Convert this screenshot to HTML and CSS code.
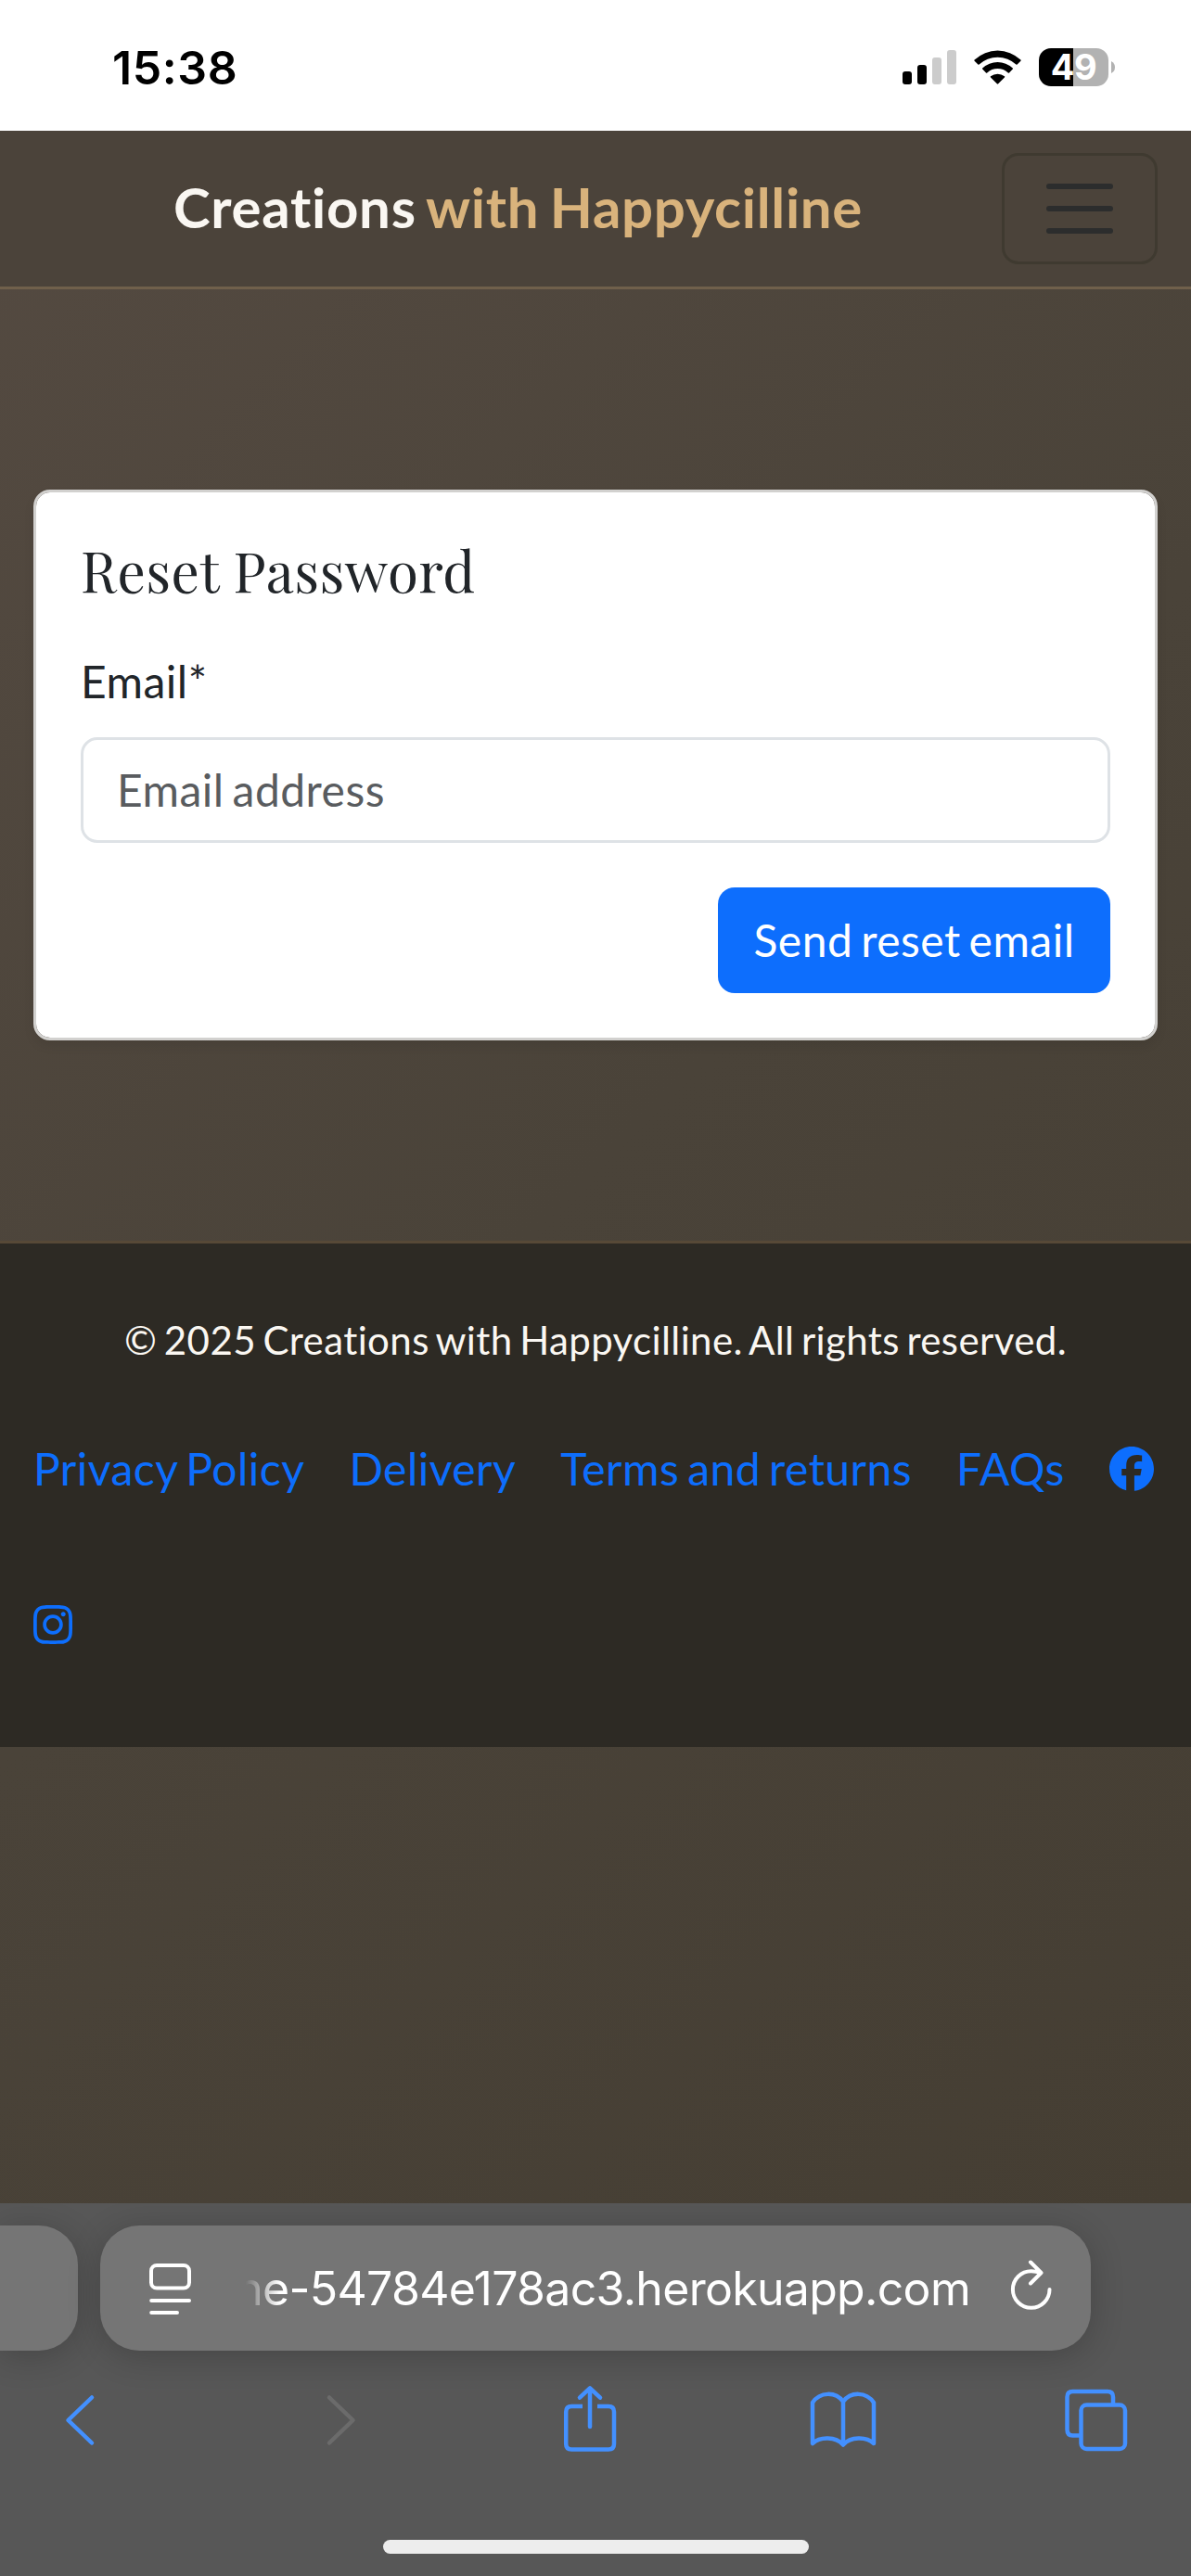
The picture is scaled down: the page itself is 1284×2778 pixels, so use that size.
FILE: index.html
```html
<!DOCTYPE html>
<html lang="en">
<head>
<meta charset="utf-8">
<title>Reset Password</title>
<link rel="stylesheet" href="styles.css">
</head>
<body>
<div class="status">
  <span class="time">15:38</span>
  <div class="indicators">
    <svg class="signal" width="58" height="37" viewBox="0 0 58 37">
      <rect x="0" y="23" width="10" height="14" rx="3"/>
      <rect x="16" y="16" width="10" height="21" rx="3"/>
      <rect class="off" x="32" y="8" width="10" height="29" rx="3"/>
      <rect class="off" x="48" y="0" width="10" height="37" rx="3"/>
    </svg>
    <svg class="wifi" width="51" height="37" viewBox="0 0 51 37">
      <path d="M0.6 10.6A36 36 0 0 1 50.4 10.6Q51 11.2 50.4 11.8L46.6 15.6Q46 16.1 45.4 15.6A29 29 0 0 0 5.6 15.6Q5 16.1 4.4 15.6L.6 11.8Q0 11.2 .6 10.6Z"/>
      <path d="M9.2 19.4A24 24 0 0 1 41.8 19.4Q42.4 20 41.8 20.6L38 24.400Q37.400 25 36.800 24.400A17 17 0 0 0 14.200 24.400Q13.600 25 13 24.400L9.200 20.600Q8.600 20 9.200 19.400Z"/>
      <path d="M18 28.300A12 12 0 0 1 33 28.300Q33.600 28.900 33 29.500L26.200 36.300Q25.500 37 24.800 36.300L18 29.500Q17.400 28.900 18 28.300Z"/>
    </svg>
    <div class="battery"><span class="level">49</span><svg width="4" height="13" viewBox="0 0 4 13"><path d="M0 0Q4 2 4 6.500T0 13Z"/></svg></div>
  </div>
</div>

<div class="page">
  <nav class="navbar">
    <a class="brand">Creations <span>with Happycilline</span></a>
    <button class="toggler" aria-label="Menu">
      <svg width="90" height="90" viewBox="0 0 30 30"><path d="M4 7h22M4 15h22M4 23h22"/></svg>
    </button>
  </nav>

  <main class="content">
    <form class="card">
      <h5 class="title">Reset Password</h5>
      <label class="label">Email*</label>
      <div class="field">Email address</div>
      <button class="submit" type="button">Send reset email</button>
    </form>
  </main>

  <footer class="footer">
    <p class="copyright">© 2025 Creations with Happycilline. All rights reserved.</p>
    <div class="links">
      <a>Privacy Policy</a>
      <a>Delivery</a>
      <a>Terms and returns</a>
      <a>FAQs</a>
      <a class="icon"><svg width="48" height="48" viewBox="0 0 512 512"><path d="M512 256C512 114.600 397.400 0 256 0S0 114.600 0 256C0 376 82.700 476.800 194.200 504.500V334.200H141.400V256h52.800V222.300c0-87.100 39.400-127.500 125-127.500c16.200 0 44.200 3.200 55.700 6.400V172c-6-.6-16.500-1-29.600-1c-42 0-58.200 15.900-58.200 57.200V256h83.600l-14.400 78.200H287V510.100C413.800 494.800 512 386.900 512 256z"/></svg></a>
      <a class="icon"><svg width="42" height="48" viewBox="0 0 448 512"><path d="M224.100 141c-63.600 0-114.900 51.300-114.900 114.900s51.300 114.900 114.900 114.900S339 319.500 339 255.900 287.700 141 224.100 141zm0 189.600c-41.100 0-74.700-33.500-74.700-74.700s33.500-74.700 74.700-74.700 74.700 33.500 74.700 74.700-33.600 74.700-74.700 74.700zm146.400-194.300c0 14.900-12 26.800-26.800 26.800-14.900 0-26.800-12-26.800-26.800s12-26.800 26.800-26.800 26.800 12 26.800 26.800zm76.100 27.200c-1.700-35.900-9.900-67.700-36.200-93.900-26.200-26.200-58-34.400-93.900-36.200-37-2.100-147.900-2.100-184.900 0-35.800 1.700-67.600 9.900-93.900 36.100s-34.400 58-36.200 93.900c-2.100 37-2.100 147.900 0 184.900 1.700 35.900 9.900 67.700 36.200 93.900s58 34.400 93.900 36.200c37 2.100 147.900 2.100 184.900 0 35.900-1.700 67.700-9.900 93.900-36.200 26.200-26.200 34.400-58 36.200-93.900 2.100-37 2.100-147.800 0-184.800zM398.800 388c-7.800 19.600-22.900 34.700-42.600 42.600-29.500 11.700-99.500 9-132.100 9s-102.700 2.600-132.100-9c-19.600-7.800-34.700-22.900-42.600-42.600-11.700-29.500-9-99.500-9-132.100s-2.600-102.700 9-132.100c7.800-19.600 22.900-34.700 42.600-42.600 29.500-11.700 99.500-9 132.100-9s102.700-2.600 132.100 9c19.600 7.800 34.700 22.900 42.600 42.600 11.700 29.500 9 99.500 9 132.100s2.700 102.700-9 132.100z"/></svg></a>
    </div>
  </footer>
</div>

<div class="browser">
  <div class="tabs">
    <div class="tab previous"></div>
    <div class="tab current">
      <svg width="46" height="56" viewBox="0 0 46 56"><rect x="2" y="3" width="41" height="24.500" rx="6"/><path d="M2.200 41H43M2.200 54H30"/></svg>
      <span class="url">ne-54784e178ac3.herokuapp.com</span>
      <svg class="reload" width="46" height="56" viewBox="0 0 46 56"><path d="M42.500 32A19.800 19.800 0 1 1 22.700 12.200Q27.500 12.200 33 14M22 2.500L33.500 14L22 25.500"/></svg>
    </div>
  </div>
  <div class="toolbar">
    <svg width="60" height="80" viewBox="0 0 60 80"><path d="M44 15.500L18.500 40L44 64.500"/></svg>
    <svg class="disabled" width="60" height="80" viewBox="0 0 60 80"><path d="M20 15.500L45.500 40L20 64.500"/></svg>
    <svg width="60" height="80" viewBox="0 0 60 80"><path class="butt" d="M22 25H10.200Q4.200 25 4.200 31V65.500Q4.200 71.500 10.200 71.500H50Q56 71.500 56 65.500V31Q56 25 50 25H38"/><path d="M30 47V6M19 15.700L30 5.300L41 15.700"/></svg>
    <svg width="74" height="80" viewBox="0 0 74 80"><path d="M37 66.500C29 57.500 12 57.500 4 65V21C12 9 29 9 37 20C45 9 62 9 70 21V65C62 57.500 45 57.500 37 66.500V20"/></svg>
    <svg width="70" height="80" viewBox="0 0 70 80"><path class="butt" d="M53 22V15Q53 9 47 9H9.500Q3.500 9 3.500 15V50Q3.500 56.500 9.500 56.500H18"/><rect x="18.500" y="23.500" width="47.500" height="47.500" rx="6"/></svg>
  </div>
  <div class="home"></div>
</div>
</body>
</html>
```
FILE: styles.css
```css
* { box-sizing: border-box; }

body {
  margin: 0;
  width: 1284px;
  height: 2778px;
  overflow: hidden;
  display: flex;
  flex-direction: column;
  font-family: Lato, "Liberation Sans", sans-serif;
  font-size: 48px;
  line-height: 72px;
  letter-spacing: 0.01em;
  word-spacing: -0.08em;
  font-variant-ligatures: none;
  color: #212529;
}

svg { display: block; flex: none; }

/* Status bar */
.status {
  height: 141px;
  flex: none;
  background: #fff;
  display: flex;
  justify-content: space-between;
  padding: 0 82px 0 121px;
  font-family: Inter, "Liberation Sans", sans-serif;
  color: #000;
}
.time {
  font-size: 50px;
  font-weight: 600;
  line-height: 60px;
  margin-top: 43px;
  letter-spacing: 0.6px;
}
.indicators { display: flex; padding-top: 52px; }
.signal { margin: 2px 19px 0 0; }
.signal .off { fill: #ccc; }
.wifi { margin: 2px 19px 0 0; }
.battery { display: flex; align-items: center; gap: 3px; height: 41px; }
.battery svg { fill: #b2b2b2; }
.level {
  width: 75px;
  height: 41px;
  border-radius: 13px;
  background: linear-gradient(90deg, #000 37px, #b2b2b2 37px);
  color: #fff;
  font-size: 38px;
  font-weight: 700;
  line-height: 41px;
  letter-spacing: -0.5px;
  text-align: center;
}

/* Web page */
.page {
  height: 2235px;
  flex: none;
  background: linear-gradient(135deg, #544a41 0%, #4a4339 50%, #453e33 100%);
}
.navbar {
  height: 171px;
  padding: 24px 36px 0 187px;
  display: flex;
  justify-content: space-between;
  align-items: flex-start;
  background: #4b433a;
  border-bottom: 3px solid #70604b;
}
.brand {
  font-size: 60px;
  font-weight: 700;
  line-height: 90px;
  margin-top: 13px;
  letter-spacing: 0.7px;
  color: #faf7f2;
  white-space: nowrap;
}
.brand span { color: #d9b37c; }
.toggler {
  width: 168px;
  height: 120px;
  padding: 0;
  border: 3px solid #3f3a30;
  border-radius: 18px;
  background: none;
  display: flex;
  align-items: center;
  justify-content: center;
}
.toggler path {
  stroke: #2c2d2d;
  stroke-width: 2;
  stroke-linecap: round;
}
.content { padding: 216px 36px; }
.card {
  height: 594px;
  padding: 47px 48px 48px;
  display: flex;
  flex-direction: column;
  background: #fff;
  background-clip: padding-box;
  border: 3px solid #d2d1cf;
  border-radius: 18px;
  box-shadow: 0 6px 12px rgba(0, 0, 0, 0.075);
}
.title {
  margin: 0 0 49px;
  font-family: "Playfair Display", "Liberation Serif", serif;
  font-size: 60px;
  font-weight: 400;
  line-height: 72px;
  letter-spacing: 0.5px;
  word-spacing: 0;
}
.label { margin-bottom: 24px; }
.field {
  height: 114px;
  padding: 18px 36px;
  border: 3px solid #dee2e6;
  border-radius: 18px;
  color: #595c5f;
}
.submit {
  align-self: flex-end;
  width: 423px;
  height: 114px;
  margin-top: 48px;
  padding: 0;
  border: 0;
  border-radius: 18px;
  background: #0d6efd;
  color: #fff;
  font: inherit;
  letter-spacing: inherit;
  word-spacing: inherit;
}
.footer {
  height: 546px;
  padding: 73px 36px 0;
  background: #2d2a24;
  border-top: 3px solid #574937;
}
.copyright {
  margin: 0 0 71px;
  font-size: 42px;
  line-height: 63px;
  letter-spacing: 0.4px;
  word-spacing: -3.6px;
  text-align: center;
  color: #faf7f2;
}
.links {
  display: flex;
  flex-wrap: wrap;
  gap: 96px 48px;
  color: #0d6efd;
  fill: #0d6efd;
  white-space: nowrap;
}
.icon { height: 72px; display: flex; align-items: center; }

/* Browser chrome */
.browser {
  height: 402px;
  flex: none;
  padding-top: 24px;
  background: #575757;
  overflow: hidden;
}
.tabs { display: flex; gap: 24px; }
.tab {
  height: 135px;
  background: #757575;
  border-radius: 42px;
  box-shadow: 0 6px 36px rgba(0, 0, 0, 0.2);
}
.previous { width: 84px; border-radius: 0 42px 42px 0; }
.current {
  width: 1068px;
  padding: 0 41px 0 53px;
  display: flex;
  align-items: center;
  color: #fff;
}
.current svg {
  fill: none;
  stroke: #fff;
  stroke-width: 4;
  stroke-linecap: round;
  stroke-linejoin: round;
}
.current .reload { margin: -6px 0 0 43px; }
.url {
  flex: 1;
  min-width: 0;
  margin-left: 58px;
  display: flex;
  justify-content: flex-end;
  overflow: hidden;
  font-family: Inter, "Liberation Sans", sans-serif;
  font-size: 50px;
  letter-spacing: -0.7px;
  white-space: nowrap;
  -webkit-mask-image: linear-gradient(90deg, transparent, #000 36px);
  mask-image: linear-gradient(90deg, transparent, #000 36px);
}
.toolbar {
  margin-top: 35px;
  padding-left: 55px;
  display: grid;
  grid-template-columns: 280px 271px 266px 275px auto;
}
.toolbar svg {
  fill: none;
  stroke: #4390ff;
  stroke-width: 4.500;
  stroke-linecap: round;
  stroke-linejoin: round;
}
.toolbar .butt { stroke-linecap: butt; }
.toolbar .disabled { stroke: #6b6b6b; }
.home {
  width: 459px;
  height: 15px;
  margin: 89px auto 0;
  border-radius: 8px;
  background: #ededed;
}
```
